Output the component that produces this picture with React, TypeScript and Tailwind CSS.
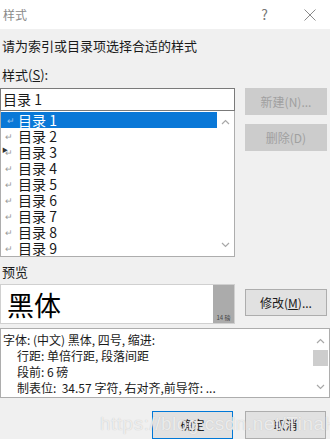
const FONT = "font-['Microsoft_YaHei','Noto_Sans_CJK_SC',sans-serif]"

function ReturnMark() {
  return <span className="inline-block w-[10px] text-[9px] leading-none text-[#9a9a9a]">↵</span>
}

function ChevronUp() {
  return (
    <svg width="9" height="6" viewBox="0 0 9 6" fill="none" stroke="#a8a8a8" strokeWidth="1.2">
      <path d="M1 5 L4.5 1.5 L8 5" />
    </svg>
  )
}

function ChevronDown() {
  return (
    <svg width="9" height="6" viewBox="0 0 9 6" fill="none" stroke="#a8a8a8" strokeWidth="1.2">
      <path d="M1 1 L4.5 4.5 L8 1" />
    </svg>
  )
}

const items = ['目录 1', '目录 2', '目录 3', '目录 4', '目录 5', '目录 6', '目录 7', '目录 8', '目录 9']

export default function App() {
  return (
    <div className={`relative w-[330px] h-[439px] overflow-hidden bg-[#f0f0f0] text-[#1a1a1a] ${FONT}`}>
      {/* title bar */}
      <div className="flex h-[29px] items-center bg-white">
        <span className="ml-[3px] text-[12px] text-[#8a8a8a]">样式</span>
        <span className="ml-auto text-[14px] text-[#777]">?</span>
        <svg className="ml-[36px] mr-[14px]" width="12" height="12" viewBox="0 0 12 12" stroke="#8a8a8a" strokeWidth="1">
          <path d="M0.5 0.5 L11.5 11.5 M11.5 0.5 L0.5 11.5" />
        </svg>
      </div>

      <p className="mt-[8px] ml-[2px] h-[17px] text-[13px] leading-[17px]">请为索引或目录项选择合适的样式</p>
      <p className="mt-[12px] ml-[2px] h-[17px] text-[13px] leading-[17px]">
        样式(<span className="underline">S</span>):
      </p>

      <div className="mt-[5px] flex">
        <div className="w-[235px]">
          <div className="flex h-[23px] items-center border border-[#7a7a7a] bg-white pl-[2px] text-[14px]">目录 1</div>
          <div className="flex h-[146px] border border-t-0 border-[#adadad] bg-white">
            <div className="flex-1 pt-[1px]">
              {items.map((it, i) => (
                <div
                  key={it}
                  className={`flex h-[16px] items-center pl-[3px] text-[14px] leading-none ${i === 0 ? 'bg-[#0a78d7] text-white' : ''}`}
                >
                  <span className="relative inline-flex w-[14px] justify-end pr-[3px]">
                    {i === 2 && <span className="absolute left-[-2px] top-[-1px] text-[6px] text-[#333]">▶</span>}
                    {i === 0 ? <span className="text-[9px] leading-none text-[#9cc4ee]">↵</span> : <ReturnMark />}
                  </span>
                  {it}
                </div>
              ))}
            </div>
            <div className="flex w-[17px] flex-col items-center justify-between py-[8px]">
              <ChevronUp />
              <ChevronDown />
            </div>
          </div>
        </div>
        <div className="ml-[10px] flex w-[82px] flex-col gap-[9px] pt-[-1px]">
          <div className="flex h-[27px] items-center justify-center bg-[#cccccc] text-[12px] text-[#a0a0a0]">新建(N)...</div>
          <div className="flex h-[27px] items-center justify-center bg-[#cccccc] text-[12px] text-[#a0a0a0]">删除(D)</div>
        </div>
      </div>

      <p className="mt-[6px] ml-[2px] h-[17px] text-[13px] leading-[17px]">预览</p>

      <div className="mt-[4px] flex items-start">
        <div className="flex h-[40px] w-[235px] border border-[#d0d0d0] bg-white">
          <div className="flex flex-1 items-center pl-[6px] text-[27px] leading-none text-black font-['Noto_Sans_CJK_SC',sans-serif]">黑体</div>
          <div className="flex w-[21px] items-end justify-center bg-[#ababab] pb-[2px]">
            <span className="text-[6px] leading-none text-[#444]">14 磅</span>
          </div>
        </div>
        <div className="ml-[10px] mt-[5px] flex h-[27px] w-[82px] items-center justify-center border border-[#adadad] bg-[#e1e1e1] text-[12px]">
          修改(<span className="underline">M</span>)...
        </div>
      </div>

      <div className="mt-[4px] flex h-[70px] w-[330px] border border-[#adadad] bg-white">
        <div className="flex-1 pt-[3px] pl-[2px] text-[12px] leading-[16px]">
          <p>字体: (中文) 黑体, 四号, 缩进:</p>
          <p className="pl-[14px]">行距: 单倍行距, 段落间距</p>
          <p className="pl-[14px]">段前: 6 磅</p>
          <p className="pl-[14px] whitespace-nowrap">制表位:&nbsp; 34.57 字符, 右对齐,前导符: ...</p>
        </div>
        <div className="flex w-[18px] flex-col items-center pt-[9px] pb-[7px]">
          <ChevronUp />
          <div className="mt-[6px] h-[16px] w-[15px] bg-[#cdcdcd]" />
          <div className="mt-auto">
            <ChevronDown />
          </div>
        </div>
      </div>

      <div className="mt-[13px] flex justify-end gap-[12px] pr-[4px]">
        <div className="flex h-[28px] w-[81px] items-center justify-center border border-[#0078d7] bg-[#e1e1e1] text-[12px]">确定</div>
        <div className="flex h-[28px] w-[81px] items-center justify-center border border-[#adadad] bg-[#e1e1e1] text-[12px]">取消</div>
      </div>

      <span className="pointer-events-none absolute left-[100px] top-[410px] text-[19px] tracking-[0.5px] text-white/70 [text-shadow:0_0_1px_#bbb] font-['Liberation_Sans',sans-serif]">
        https://blog.csdn.net/TinaHuang
      </span>
    </div>
  )
}
